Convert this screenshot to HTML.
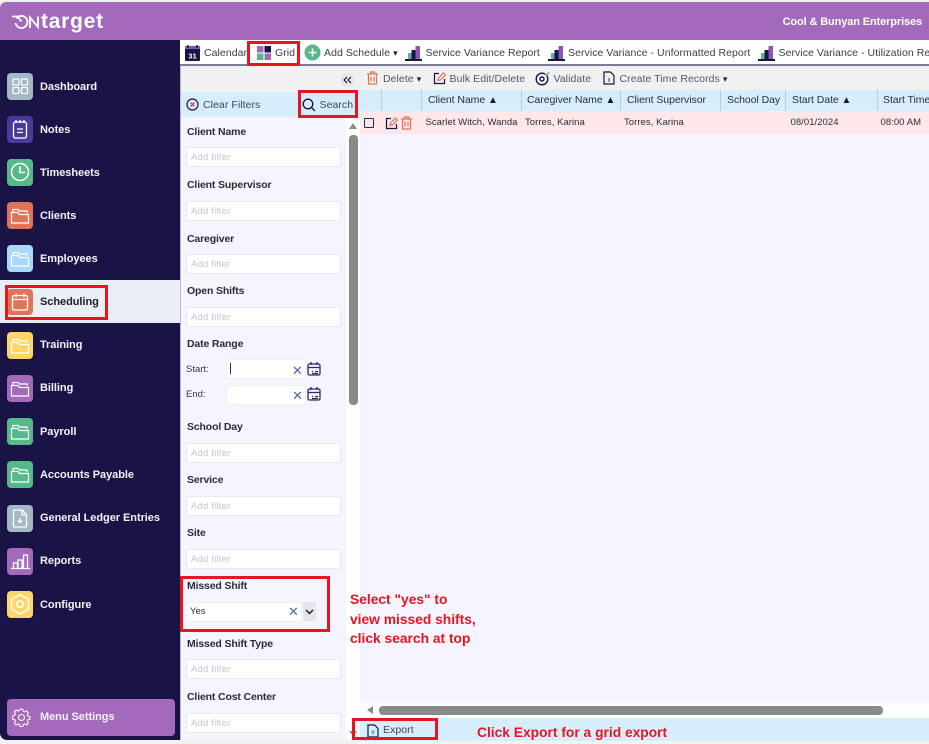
<!DOCTYPE html>
<html><head><meta charset="utf-8"><style>
*{box-sizing:border-box}
html,body{margin:0;padding:0}
body{width:929px;height:744px;overflow:hidden;position:relative;background:#f2f2f3;font-family:"Liberation Sans",sans-serif;color:#2a2a3c}
.a{position:absolute}
.t{position:absolute;white-space:nowrap;line-height:14px}
.nav{position:absolute;left:40px;color:#f4f2fb;font-weight:bold;font-size:11px;letter-spacing:-.05px;line-height:14px;white-space:nowrap}
.ic{position:absolute;left:6.5px;width:26.5px;height:26.5px;border-radius:4px}
.ic svg,.s{position:absolute;left:0;top:0}
.lab{position:absolute;left:187px;font-size:10.5px;font-weight:bold;letter-spacing:-.15px;color:#2b2b3a;line-height:14px;white-space:nowrap}
.inp{position:absolute;left:186px;width:155px;height:20px;background:#fff;border:1px solid #e8e8ee;border-radius:2px;font-size:9.5px;color:#c4c4cc;line-height:20px;padding-left:4px;letter-spacing:.2px}
.tb{position:absolute;font-size:10.5px;color:#3c3c4c;letter-spacing:.06px;line-height:14px;white-space:nowrap}
.th{position:absolute;top:93px;font-size:10.5px;color:#2c2c40;letter-spacing:-.06px;line-height:14px;white-space:nowrap}
.td{position:absolute;top:116px;font-size:9.5px;color:#2c2c3c;letter-spacing:.05px;line-height:14px;white-space:nowrap}
.sep{position:absolute;top:90px;width:1px;height:21px;background:#b9cbdc}
.red{position:absolute;border:3px solid #e8141f}
.note{position:absolute;color:#e8141f;font-family:"Liberation Sans",sans-serif;font-weight:bold;font-size:13.8px;white-space:nowrap;line-height:20px}
.car{font-size:9px;vertical-align:0;color:#222}
.up{font-size:10px;vertical-align:0;color:#191346}
</style></head><body>

<!-- header -->
<div class="a" style="left:0;top:2px;width:929px;height:38px;background:#a36abc;border-radius:6px 0 0 0"></div>
<svg class="a" style="left:12px;top:14px" width="29" height="16" viewBox="0 0 29 16" fill="none" stroke="#fff" stroke-width="1.800"><path d="M0 2.500h5.500l4 5"/><path d="M4.500 4.500A6 6 0 1 1 3.500 9"/><path d="M18 14V3.500l8 9.500V2.500"/></svg>
<div class="t" style="left:41px;top:11px;color:#fff;font-size:21px;line-height:22px;font-weight:bold;letter-spacing:.75px">target</div>
<div class="t" style="right:7px;top:15px;color:#fff;font-size:11px;font-weight:bold;letter-spacing:-.12px">Cool &amp; Bunyan Enterprises</div>

<!-- sidebar -->
<div class="a" style="left:0;top:40px;width:180px;height:700px;background:#191346;border-radius:0 0 0 7px"></div>
<div class="a" style="left:0;top:280px;width:180px;height:43px;background:#e9eff4"></div>

<div class="ic" style="top:73px;background:#a3b7c4"><svg width="26" height="26" fill="none" stroke="#fff" stroke-width="1.300"><rect x="6" y="6" width="6" height="6" rx="1"/><rect x="14.500" y="6" width="6" height="6" rx="1"/><rect x="6" y="14.500" width="6" height="6" rx="1"/><rect x="14.500" y="14.500" width="6" height="6" rx="1"/></svg></div>
<div class="nav" style="top:80px">Dashboard</div>
<div class="ic" style="top:116px;background:#483a9c"><svg width="26" height="26" fill="none" stroke="#fff" stroke-width="1.300"><rect x="6.500" y="6" width="13" height="16" rx="2"/><path d="M9 4v3M13 4v3M17 4v3M10 13h6M10 16.500h6"/></svg></div>
<div class="nav" style="top:123px">Notes</div>
<div class="ic" style="top:159px;background:#56b98a"><svg width="26" height="26" fill="none" stroke="#fff" stroke-width="1.500"><circle cx="13" cy="13" r="8.500"/><path d="M13 7.500V13.500H18"/></svg></div>
<div class="nav" style="top:166px">Timesheets</div>
<div class="ic" style="top:202px;background:#df7558"><svg width="26" height="26" fill="none" stroke="#fff" stroke-width="1.200"><path d="M6 10V7.500h5l1.500 1.500h7.500v2"/><path d="M4.500 10.500h6.500l1.500 2h9v8.500h-17z"/></svg></div>
<div class="nav" style="top:209px">Clients</div>
<div class="ic" style="top:245px;background:#a9d8fb"><svg width="26" height="26" fill="none" stroke="#fff" stroke-width="1.200"><path d="M6 10V7.500h5l1.500 1.500h7.500v2"/><path d="M4.500 10.500h6.500l1.500 2h9v8.500h-17z"/></svg></div>
<div class="nav" style="top:252px">Employees</div>
<div class="ic" style="top:288.500px;background:#df7558"><svg width="26" height="26" fill="none" stroke="#fff" stroke-width="1.300"><rect x="5.500" y="6.500" width="15" height="14.500" rx="1.500"/><path d="M5.500 10.500h15M9 4.500v4M17 4.500v4"/></svg></div>
<div class="nav" style="top:295px;color:#1c1c34">Scheduling</div>
<div class="ic" style="top:332px;background:#fdd667"><svg width="26" height="26" fill="none" stroke="#fff" stroke-width="1.200"><path d="M6 10V7.500h5l1.500 1.500h7.500v2"/><path d="M4.500 10.500h6.500l1.500 2h9v8.500h-17z"/></svg></div>
<div class="nav" style="top:338px">Training</div>
<div class="ic" style="top:375px;background:#a36abc"><svg width="26" height="26" fill="none" stroke="#fff" stroke-width="1.200"><path d="M6 10V7.500h5l1.500 1.500h7.500v2"/><path d="M4.500 10.500h6.500l1.500 2h9v8.500h-17z"/></svg></div>
<div class="nav" style="top:381px">Billing</div>
<div class="ic" style="top:418px;background:#56b98a"><svg width="26" height="26" fill="none" stroke="#fff" stroke-width="1.200"><path d="M6 10V7.500h5l1.500 1.500h7.500v2"/><path d="M4.500 10.500h6.500l1.500 2h9v8.500h-17z"/></svg></div>
<div class="nav" style="top:425px">Payroll</div>
<div class="ic" style="top:461px;background:#56b98a"><svg width="26" height="26" fill="none" stroke="#fff" stroke-width="1.200"><path d="M6 10V7.500h5l1.500 1.500h7.500v2"/><path d="M4.500 10.500h6.500l1.500 2h9v8.500h-17z"/></svg></div>
<div class="nav" style="top:468px">Accounts Payable</div>
<div class="ic" style="top:505px;background:#a3b7c4"><svg width="26" height="26" fill="none" stroke="#fff" stroke-width="1.300"><path d="M6.500 6a1 1 0 0 1 1-1H15l4.500 4.500V21a1 1 0 0 1-1 1h-11a1 1 0 0 1-1-1z"/><path d="M15 5v5h4.500M13 12.500v5M10.800 15.500l2.200 2.200 2.200-2.200"/></svg></div>
<div class="nav" style="top:511px">General Ledger Entries</div>
<div class="ic" style="top:548px;background:#a36abc"><svg width="26" height="26" fill="none" stroke="#fff" stroke-width="1.300"><path d="M4 20.500h19M6.500 20v-5h4v5M11 20v-8h4v8M16.500 20V7h4v13"/></svg></div>
<div class="nav" style="top:554px">Reports</div>
<div class="ic" style="top:591px;background:#fdd667"><svg width="26" height="26" fill="none" stroke="#fff" stroke-width="1.500"><path d="M13 3.500l8.500 4.800v9.800L13 23l-8.500-4.900V8.300z"/><circle cx="13" cy="13.200" r="3.200"/></svg></div>
<div class="nav" style="top:598px">Configure</div>

<div class="a" style="left:7px;top:699px;width:168px;height:37px;background:#a36abc;border-radius:4px"></div>
<svg class="a" style="left:12px;top:708px" width="19" height="19" viewBox="0 0 19 19" fill="none" stroke="#fff" stroke-width="1.100"><path d="M8 1h3l.5 2.300 1.600.7 2-1.200 2 2.100-1.200 2 .6 1.600 2.300.5v2.800l-2.300.5-.6 1.600 1.200 2-2 2.100-2-1.200-1.600.7-.5 2.300H8l-.5-2.300-1.600-.7-2 1.200-2-2.100 1.200-2-.6-1.600-2.300-.5V8l2.300-.5.6-1.600-1.200-2 2-2.100 2 1.200 1.600-.7z" transform="translate(.5 .2) scale(.93)"/><circle cx="9.500" cy="9.500" r="3"/></svg>
<div class="nav" style="top:710px">Menu Settings</div>

<!-- toolbar -->
<div class="a" style="left:180px;top:40px;width:749px;height:26px;background:#fff;border-bottom:2px solid #7f7a96"></div>
<div class="a" style="left:180px;top:66px;width:749px;height:25px;background:#f1f1f2"></div>
<svg class="a" style="left:184px;top:44px" width="17" height="17"><rect x="1" y="2" width="15" height="15" rx="1" fill="#191346"/><rect x="1" y="2" width="15" height="3" fill="#7d5aa8"/><path d="M4 1v3M13 1v3" stroke="#191346" stroke-width="1.500"/><text x="8.500" y="14.500" font-size="7.500" font-weight="bold" fill="#fff" text-anchor="middle" font-family="Liberation Sans">31</text></svg>
<div class="tb" style="left:204px;top:46px">Calendar</div>
<svg class="a" style="left:256px;top:46px" width="16" height="14"><rect x="1" y="0" width="6.500" height="6.500" fill="#a36abc"/><rect x="8.500" y="0" width="6.500" height="6.500" fill="#191346"/><rect x="1" y="7.500" width="6.500" height="6.500" fill="#56b98a"/><rect x="8.500" y="7.500" width="6.500" height="6.500" fill="#a36abc"/></svg>
<div class="tb" style="left:275px;top:46px">Grid</div>
<svg class="a" style="left:304px;top:44px" width="17" height="17"><circle cx="8.500" cy="8.500" r="8" fill="#56b98a"/><path d="M8.500 4.500v8M4.500 8.500h8" stroke="#fff" stroke-width="1.600"/></svg>
<div class="tb" style="left:324px;top:46px">Add Schedule <span class="car">&#9662;</span></div>
<svg class="a" style="left:405px;top:45px" width="17" height="16"><rect x="3" y="8" width="4" height="6" fill="#56b98a"/><rect x="6.500" y="5" width="4" height="9" fill="#191346"/><rect x="10.500" y="1" width="4.500" height="13" fill="#8d56b0"/><rect x="0" y="14" width="17" height="2" fill="#191346"/></svg>
<div class="tb" style="left:425.500px;top:46px">Service Variance Report</div>
<svg class="a" style="left:548px;top:45px" width="17" height="16"><rect x="3" y="8" width="4" height="6" fill="#56b98a"/><rect x="6.500" y="5" width="4" height="9" fill="#191346"/><rect x="10.500" y="1" width="4.500" height="13" fill="#8d56b0"/><rect x="0" y="14" width="17" height="2" fill="#191346"/></svg>
<div class="tb" style="left:568px;top:46px">Service Variance - Unformatted Report</div>
<svg class="a" style="left:758px;top:45px" width="17" height="16"><rect x="3" y="8" width="4" height="6" fill="#56b98a"/><rect x="6.500" y="5" width="4" height="9" fill="#191346"/><rect x="10.500" y="1" width="4.500" height="13" fill="#8d56b0"/><rect x="0" y="14" width="17" height="2" fill="#191346"/></svg>
<div class="tb" style="left:778.500px;top:46px">Service Variance - Utilization Report</div>

<div class="a" style="left:340px;top:73px;width:14px;height:14px;border-radius:7px;background:#e6e6ea"></div>
<svg class="a" style="left:343px;top:76px" width="9" height="8" fill="none" stroke="#191346" stroke-width="1.200"><path d="M4 1L1 4l3 3M8 1L5 4l3 3"/></svg>
<svg class="a" style="left:366px;top:71px" width="13" height="14" fill="none" stroke="#df7558" stroke-width="1.200"><path d="M1 3h11M4.500 3V1h4v2M2.500 3v10h8V3M5 5.500v5M8 5.500v5"/></svg>
<div class="tb" style="left:383px;top:72px;color:#55556a">Delete <span class="car">&#9662;</span></div>
<svg class="a" style="left:433px;top:71px" width="14" height="14" fill="none" stroke-width="1.200"><path d="M6 2.500H1.500v10h10V8" stroke="#191346"/><path d="M5 9.500l.5-2.500 5-5 2 2-5 5z" stroke="#df7558"/></svg>
<div class="tb" style="left:449.500px;top:72px;color:#55556a">Bulk Edit/Delete</div>
<svg class="a" style="left:535px;top:71px" width="15" height="15" fill="none" stroke="#191346" stroke-width="1.400"><circle cx="7" cy="8" r="5.800"/><circle cx="7" cy="8" r="2"/><path d="M10 3l1.500 1.500L14 1" stroke="#56b98a"/></svg>
<div class="tb" style="left:553.500px;top:72px;color:#55556a">Validate</div>
<svg class="a" style="left:603px;top:71px" width="12" height="14" fill="none" stroke="#191346" stroke-width="1.200"><path d="M1 1h6.500L11 4.500V13H1z"/><path d="M6 7v4" stroke="#56b98a" stroke-width="2"/></svg>
<div class="tb" style="left:619.500px;top:72px;color:#55556a">Create Time Records <span class="car">&#9662;</span></div>

<!-- filter panel -->
<div class="a" style="left:180px;top:66px;width:1px;height:674px;background:#b9b6c8"></div>
<div class="a" style="left:181px;top:117px;width:165px;height:623px;background:#f6f4ff"></div>
<div class="a" style="left:346px;top:117px;width:14px;height:623px;background:#fdfdfe"></div>
<div class="a" style="left:181px;top:92px;width:179px;height:25px;background:#d6eefc"></div>
<svg class="a" style="left:186px;top:98px" width="14" height="14" fill="none"><circle cx="6.500" cy="6.500" r="5.500" stroke="#191346" stroke-width="1.200"/><path d="M4.500 4.500l4 4M8.500 4.500l-4 4" stroke="#d9232e" stroke-width="1.200"/></svg>
<div class="tb" style="left:203px;top:98px;color:#44445a">Clear Filters</div>
<svg class="a" style="left:302px;top:98px" width="14" height="14" fill="none" stroke="#191346" stroke-width="1.300"><circle cx="6" cy="6" r="4.800"/><path d="M9.500 9.500L13 13"/></svg>
<div class="tb" style="left:319.500px;top:98px;color:#44445a">Search</div>

<div class="lab" style="top:125px">Client Name</div><div class="inp" style="top:147px">Add filter</div>
<div class="lab" style="top:178px">Client Supervisor</div><div class="inp" style="top:201px">Add filter</div>
<div class="lab" style="top:232px">Caregiver</div><div class="inp" style="top:254px">Add filter</div>
<div class="lab" style="top:284px">Open Shifts</div><div class="inp" style="top:307px">Add filter</div>
<div class="lab" style="top:337px">Date Range</div>
<div class="t" style="left:186px;top:363px;font-size:9.500px;color:#33334a">Start:</div>
<div class="a" style="left:226px;top:359px;width:80px;height:20px;background:#fff;border:1px solid #eee"></div>
<div class="a" style="left:230px;top:363px;width:1px;height:11px;background:#333"></div>
<div class="t" style="left:292px;top:364px;font-size:13px;color:#4d68a8">&#10005;</div>
<div class="t" style="left:186px;top:388px;font-size:9.500px;color:#33334a">End:</div>
<div class="a" style="left:226px;top:385px;width:80px;height:20px;background:#fff;border:1px solid #eee"></div>
<div class="t" style="left:292px;top:389px;font-size:13px;color:#4d68a8">&#10005;</div>
<svg class="a" style="left:307px;top:362px" width="14" height="14" fill="none" stroke="#2f2a6a" stroke-width="1.300"><rect x="1" y="2" width="12" height="11" rx="1.500"/><path d="M1 5.500h12M4 0v3M10 0v3M5 9.500h1M8 9.500h3M5 11.500h6"/></svg>
<svg class="a" style="left:307px;top:387px" width="14" height="14" fill="none" stroke="#2f2a6a" stroke-width="1.300"><rect x="1" y="2" width="12" height="11" rx="1.500"/><path d="M1 5.500h12M4 0v3M10 0v3M5 9.500h1M8 9.500h3M5 11.500h6"/></svg>
<div class="lab" style="top:420px">School Day</div><div class="inp" style="top:443px">Add filter</div>
<div class="lab" style="top:473px">Service</div><div class="inp" style="top:496px">Add filter</div>
<div class="lab" style="top:526px">Site</div><div class="inp" style="top:549px">Add filter</div>
<div class="lab" style="top:579px">Missed Shift</div>
<div class="a" style="left:186px;top:602px;width:116px;height:20px;background:#fff;border:1px solid #eee"></div>
<div class="t" style="left:190px;top:605px;font-size:9.500px;color:#2c2c3c">Yes</div>
<div class="t" style="left:288px;top:605px;font-size:13px;color:#4d68a8">&#10005;</div>
<div class="a" style="left:303px;top:602px;width:13px;height:19px;background:#e6e6e8"></div>
<svg class="a" style="left:305px;top:609px" width="9" height="6" fill="none" stroke="#191346" stroke-width="1.400"><path d="M1 1l3.500 3.500L8 1"/></svg>
<div class="lab" style="top:637px">Missed Shift Type</div><div class="inp" style="top:659px">Add filter</div>
<div class="lab" style="top:690px">Client Cost Center</div><div class="inp" style="top:713px">Add filter</div>

<!-- filter scroll -->
<div class="a" style="left:349px;top:135px;width:9px;height:270px;background:#8a8a8a;border-radius:4px"></div>
<div class="a" style="left:349px;top:123px;width:0;height:0;border:4px solid transparent;border-bottom:6px solid #8a8a8a;border-top:0"></div>
<div class="a" style="left:349px;top:731px;width:0;height:0;border:4px solid transparent;border-top:5px solid #8a8a8a;border-bottom:0"></div>

<!-- grid -->
<div class="a" style="left:361px;top:111px;width:568px;height:595px;background:#f6f4ff"></div>
<div class="a" style="left:360px;top:90px;width:569px;height:21px;background:#d6eefc"></div>
<div class="sep" style="left:381px"></div><div class="sep" style="left:421px"></div><div class="sep" style="left:521px"></div><div class="sep" style="left:620px"></div><div class="sep" style="left:720px"></div><div class="sep" style="left:785px"></div><div class="sep" style="left:877px"></div>
<div class="th" style="left:428px">Client Name <span class="up">&#9650;</span></div>
<div class="th" style="left:527px">Caregiver Name <span class="up">&#9650;</span></div>
<div class="th" style="left:627px">Client Supervisor</div>
<div class="th" style="left:727px">School Day</div>
<div class="th" style="left:792px">Start Date <span class="up">&#9650;</span></div>
<div class="th" style="left:883px">Start Time</div>

<div class="a" style="left:361px;top:111px;width:568px;height:23px;background:#fde7e8"></div>
<div class="a" style="left:364px;top:118px;width:10px;height:10px;border:1.500px solid #2b2560;border-radius:1px"></div>
<svg class="a" style="left:385px;top:116px" width="14" height="14" fill="none" stroke-width="1.200"><path d="M6 2.500H1.500v10h10V8" stroke="#191346"/><path d="M5 9.500l.5-2.500 5-5 2 2-5 5z" stroke="#df7558"/></svg>
<svg class="a" style="left:400px;top:116px" width="13" height="14" fill="none" stroke="#df7558" stroke-width="1.200"><path d="M1 3h11M4.500 3V1h4v2M2.500 3v10h8V3M5 5.500v5M8 5.500v5"/></svg>
<div class="td" style="left:425.500px">Scarlet Witch, Wanda</div>
<div class="td" style="left:525px">Torres, Karina</div>
<div class="td" style="left:624px">Torres, Karina</div>
<div class="td" style="left:790.500px">08/01/2024</div>
<div class="td" style="left:880.500px">08:00 AM</div>

<!-- h scroll -->
<div class="a" style="left:360px;top:703px;width:569px;height:15px;background:#fdfdfe"></div>
<div class="a" style="left:379px;top:706px;width:504px;height:9px;background:#8a8a8a;border-radius:4px"></div>
<div class="a" style="left:367px;top:706px;width:0;height:0;border:4px solid transparent;border-right:6px solid #8a8a8a;border-left:0"></div>

<!-- footer -->
<div class="a" style="left:360px;top:718px;width:569px;height:23px;background:#d6eefc"></div>
<svg class="a" style="left:367px;top:724px" width="12" height="14" fill="none" stroke="#191346" stroke-width="1.200"><path d="M1 1h6.500L11 4.500V13H1z"/><path d="M6 11V7M4.300 8.500L6 6.800l1.700 1.700" stroke="#56b98a"/></svg>
<div class="tb" style="left:383px;top:723px;color:#44445a">Export</div>

<!-- annotations -->
<div class="red" style="left:5px;top:285px;width:103px;height:35px"></div>
<div class="red" style="left:247px;top:41px;width:53px;height:25px"></div>
<div class="red" style="left:298px;top:90px;width:60px;height:28px"></div>
<div class="red" style="left:180px;top:576px;width:150px;height:56px"></div>
<div class="red" style="left:352px;top:718px;width:86px;height:22px"></div>
<div class="note" style="left:350px;top:590px">Select "yes" to</div>
<div class="note" style="left:350px;top:610px">view missed shifts,</div>
<div class="note" style="left:350px;top:629px">click search at top</div>
<div class="note" style="left:477px;top:723px">Click Export for a grid export</div>
</body></html>
